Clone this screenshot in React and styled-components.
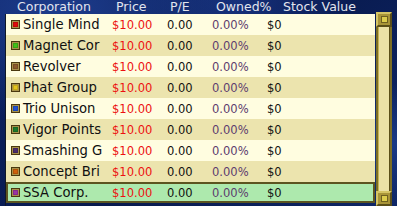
import styled, { createGlobalStyle } from 'styled-components';

const GlobalStyle = createGlobalStyle`
  html, body {
    margin: 0;
    padding: 0;
    background: #0a1a48;
  }
`;

const Page = styled.div`
  width: 397px;
  height: 206px;
  overflow: hidden;
  font-family: 'DejaVu Sans', sans-serif;
  background:
    radial-gradient(ellipse at 15% 5%, #1d3c8c 0%, transparent 40%),
    radial-gradient(ellipse at 60% 0%, #16307a 0%, transparent 35%),
    radial-gradient(ellipse at 100% 70%, #1a3a86 0%, transparent 30%),
    linear-gradient(135deg, #0c2262 0%, #081a4e 50%, #0e2666 100%);
  display: grid;
  grid-template-columns: 5px 370px 17px 5px;
  grid-template-rows: 14px 1fr;
`;

const HeaderRow = styled.div`
  grid-column: 2 / 3;
  grid-row: 1;
  display: grid;
  grid-template-columns: 107px 55px 45px 55px 1fr;
  height: 14px;
  font-size: 12.5px;
  line-height: 13px;
  color: #e2e5ee;
  white-space: nowrap;
`;

const HeaderCell = styled.div`
  padding-left: ${(p) => p.$pad}px;
`;

const List = styled.div`
  grid-column: 2 / 3;
  grid-row: 2;
  border-left: 1px solid #101828;
  display: flex;
  flex-direction: column;
`;

const Row = styled.div`
  display: grid;
  grid-template-columns: 106px 55px 45px 55px 1fr;
  align-items: center;
  height: 21px;
  flex: none;
  background: ${(p) => (p.$active ? '#ade9ad' : p.$alt ? '#ece4ae' : '#fffde0')};
  box-shadow: ${(p) => (p.$active ? 'inset 0 0 0 2px #5c5420' : 'none')};
  white-space: nowrap;
`;

const NameCell = styled.div`
  display: flex;
  align-items: center;
  padding-left: 5px;
  font-size: 13.2px;
  color: #101010;
  overflow: hidden;
`;

const NumCell = styled.div`
  font-family: 'DejaVu Sans Condensed', 'DejaVu Sans', sans-serif;
  font-size: 12.8px;
  color: ${(p) => p.$color || '#101010'};
`;

const Swatch = styled.span`
  width: 5px;
  height: 5px;
  flex: none;
  margin-right: 3px;
  background: ${(p) => p.$c};
  border: 2px solid #a8924a;
  outline: 1px solid #4a3810;
  outline-offset: -1px;
  box-shadow: inset 0 0 0 1px rgba(0, 0, 0, 0.15);
  box-sizing: content-box;
`;

const Scrollbar = styled.div`
  grid-column: 3 / 4;
  grid-row: 1 / 3;
  margin-top: 12px;
  margin-left: 1px;
  display: flex;
  flex-direction: column;
  background: #ebe1a6;
  border-left: 2px solid #7c6e24;
  border-right: 2px solid #7c6e24;
  box-shadow: inset 1px 0 0 #c8b450, inset -1px 0 0 #5a4e18;
`;

const ScrollButton = styled.div`
  height: 15px;
  margin: 0 -2px;
  flex: none;
  box-sizing: border-box;
  background: #a89438;
  border: 2px solid #d4c464;
  border-right-color: #5a4e18;
  border-bottom-color: #5a4e18;
  display: flex;
  align-items: center;
  justify-content: center;
  &::after {
    content: '';
    width: 5px;
    height: 5px;
    background: #dccc4c;
    border: 1px solid #6e6020;
  }
`;

const Track = styled.div`
  flex: 1;
`;

const corps = [
  { name: 'Single Mind', c: '#e00a0a' },
  { name: 'Magnet Cor', c: '#40c018' },
  { name: 'Revolver', c: '#8c5a2c' },
  { name: 'Phat Group', c: '#e4c41c' },
  { name: 'Trio Unison', c: '#1e50d0' },
  { name: 'Vigor Points', c: '#1c7a2c' },
  { name: 'Smashing G', c: '#4a2c6c' },
  { name: 'Concept Bri', c: '#d0600c' },
  { name: 'SSA Corp.', c: '#9a34a4', active: true },
];

export default function App() {
  return (
    <Page>
      <GlobalStyle />
      <HeaderRow>
        <HeaderCell $pad={12}>Corporation</HeaderCell>
        <HeaderCell $pad={4}>Price</HeaderCell>
        <HeaderCell $pad={3}>P/E</HeaderCell>
        <HeaderCell $pad={4}>Owned%</HeaderCell>
        <HeaderCell $pad={16}>Stock Value</HeaderCell>
      </HeaderRow>
      <List>
        {corps.map((c, i) => (
          <Row key={c.name} $alt={i % 2 === 1} $active={c.active}>
            <NameCell>
              <Swatch $c={c.c} />
              {c.name}
            </NameCell>
            <NumCell $color="#ec1010">$10.00</NumCell>
            <NumCell>0.00</NumCell>
            <NumCell $color="#5c3c6e">0.00%</NumCell>
            <NumCell>$0</NumCell>
          </Row>
        ))}
      </List>
      <Scrollbar>
        <ScrollButton />
        <Track />
        <ScrollButton />
      </Scrollbar>
    </Page>
  );
}
